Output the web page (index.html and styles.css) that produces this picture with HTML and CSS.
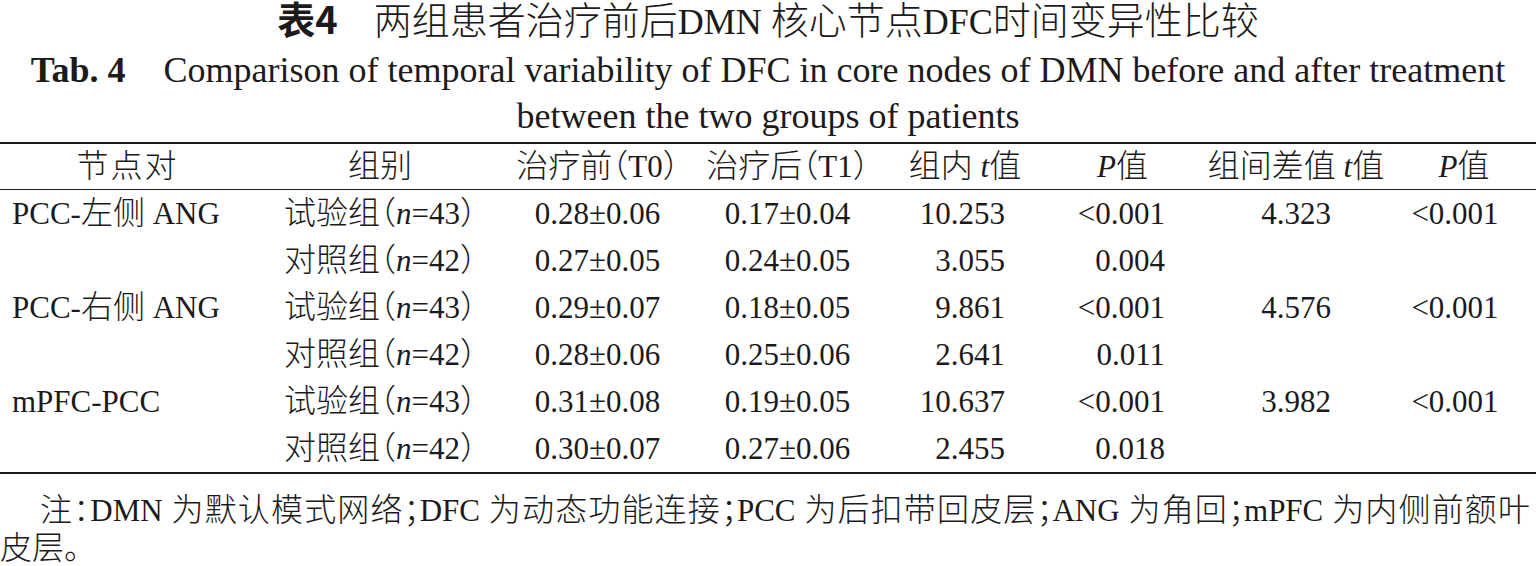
FILE: index.html
```html
<!DOCTYPE html>
<html lang="zh">
<head>
<meta charset="utf-8">
<title>表4 两组患者治疗前后DMN核心节点DFC时间变异性比较</title>
<link rel="stylesheet" href="styles.css">
</head>
<body>
<div class="page">
  <header class="caption">
    <div class="cap-zh"><b class="tabno">表4</b><span class="zh">两组患者治疗前后</span><span class="lat">DMN </span><span class="zh">核心节点</span><span class="lat">DFC</span><span class="zh">时间变异性比较</span></div>
    <div class="cap-en"><b class="tabno-en">Tab. 4</b><span class="cap-en-text">Comparison of temporal variability of DFC in core nodes of DMN before and after treatment</span><br>between the two groups of patients</div>
  </header>

  <table class="data">
    <colgroup>
      <col class="c1"><col class="c2"><col class="c3"><col class="c4">
      <col class="c5"><col class="c6"><col class="c7"><col class="c8">
    </colgroup>
    <thead>
      <tr>
        <th><span class="zh sp">节点对</span></th>
        <th><span class="zh">组别</span></th>
        <th><span class="zh">治疗前（</span>T0<span class="zh">）</span></th>
        <th><span class="zh">治疗后（</span>T1<span class="zh">）</span></th>
        <th><span class="zh">组内</span> <i>t</i><span class="zh">值</span></th>
        <th><i>P</i><span class="zh">值</span></th>
        <th><span class="zh">组间差值</span> <i>t</i><span class="zh">值</span></th>
        <th><i>P</i><span class="zh">值</span></th>
      </tr>
    </thead>
    <tbody>
      <tr>
        <td class="node">PCC-<span class="zh">左侧</span> ANG</td>
        <td><span class="zh">试验组（</span><i>n</i>=43<span class="zh">）</span></td>
        <td>0.28±0.06</td><td>0.17±0.04</td>
        <td class="tin">10.253</td><td class="pin">&lt;0.001</td>
        <td>4.323</td><td class="pbt">&lt;0.001</td>
      </tr>
      <tr>
        <td class="node"></td>
        <td><span class="zh">对照组（</span><i>n</i>=42<span class="zh">）</span></td>
        <td>0.27±0.05</td><td>0.24±0.05</td>
        <td class="tin">3.055</td><td class="pin">0.004</td>
        <td></td><td class="pbt"></td>
      </tr>
      <tr>
        <td class="node">PCC-<span class="zh">右侧</span> ANG</td>
        <td><span class="zh">试验组（</span><i>n</i>=43<span class="zh">）</span></td>
        <td>0.29±0.07</td><td>0.18±0.05</td>
        <td class="tin">9.861</td><td class="pin">&lt;0.001</td>
        <td>4.576</td><td class="pbt">&lt;0.001</td>
      </tr>
      <tr>
        <td class="node"></td>
        <td><span class="zh">对照组（</span><i>n</i>=42<span class="zh">）</span></td>
        <td>0.28±0.06</td><td>0.25±0.06</td>
        <td class="tin">2.641</td><td class="pin">0.011</td>
        <td></td><td class="pbt"></td>
      </tr>
      <tr>
        <td class="node">mPFC-PCC</td>
        <td><span class="zh">试验组（</span><i>n</i>=43<span class="zh">）</span></td>
        <td>0.31±0.08</td><td>0.19±0.05</td>
        <td class="tin">10.637</td><td class="pin">&lt;0.001</td>
        <td>3.982</td><td class="pbt">&lt;0.001</td>
      </tr>
      <tr>
        <td class="node"></td>
        <td><span class="zh">对照组（</span><i>n</i>=42<span class="zh">）</span></td>
        <td>0.30±0.07</td><td>0.27±0.06</td>
        <td class="tin">2.455</td><td class="pin">0.018</td>
        <td></td><td class="pbt"></td>
      </tr>
    </tbody>
  </table>

  <div class="note">
    <p class="note-l1"><span class="zh">注：</span>DMN <span class="zh">为默认模式网络；</span>DFC <span class="zh">为动态功能连接；</span>PCC <span class="zh">为后扣带回皮层；</span>ANG <span class="zh">为角回；</span>mPFC <span class="zh">为内侧前额叶</span></p>
    <p class="note-l2"><span class="zh">皮层。</span></p>
  </div>
</div>
</body>
</html>
```

FILE: styles.css
```css
html, body {
  margin: 0;
  padding: 0;
  background: #ffffff;
}

body {
  width: 1536px;
  height: 566px;
  overflow: hidden;
  color: #1c1a1b;
  font-family: "Liberation Serif", "Noto Sans CJK SC", serif;
}

.page {
  width: 1536px;
}

.zh {
  font-family: "Noto Sans CJK SC", sans-serif;
  font-weight: 300;
  font-feature-settings: "halt";
}

/* caption */
.caption {
  text-align: center;
}

.cap-zh {
  height: 42px;
  line-height: 42px;
  font-size: 36px;
  font-weight: 400;
  margin-bottom: 5px;
}

.cap-zh .lat {
  font-family: "Liberation Serif", serif;
  font-weight: 400;
}

.cap-zh .zh {
  font-size: 38px;
  line-height: 36px;
}

.cap-zh .tabno {
  font-family: "Noto Sans CJK SC", sans-serif;
  font-weight: 700;
  font-size: 38px;
  line-height: 36px;
  margin-right: 36px;
}

.cap-en {
  font-size: 36px;
  line-height: 46px;
  height: 92px;
}

.cap-en .tabno-en {
  margin-right: 38px;
}

/* table */
.data {
  margin-top: 3px;
  width: 1536px;
  table-layout: fixed;
  border-collapse: collapse;
  font-size: 31px;
}

.c1 { width: 255px; }
.c2 { width: 250px; }
.c3 { width: 185px; }
.c4 { width: 195px; }
.c5 { width: 160px; }
.c6 { width: 155px; }
.c7 { width: 192px; }
.c8 { width: 144px; }

.data th,
.data td {
  padding: 0;
  text-align: center;
  white-space: nowrap;
  font-weight: normal;
}

.data th {
  height: 45px;
  line-height: 45px;
  border-top: 2px solid #1c1a1b;
  border-bottom: 1px solid #1c1a1b;
}

.data td {
  height: 47px;
  line-height: 47px;
}

.data .zh {
  font-size: 32px;
  line-height: 30px;
}

.data th .sp {
  letter-spacing: 2px;
}

.data tbody tr:last-child td {
  border-bottom: 2px solid #1c1a1b;
}

.data td.node {
  text-align: left;
  padding-left: 12px;
}

.data td.tin {
  text-align: right;
  padding-right: 40px;
}

.data td.pin {
  text-align: right;
  padding-right: 35px;
}

.data td.pbt {
  padding-right: 18px;
}

/* note */
.note {
  font-size: 31px;
  margin-top: 18px;
}

.note p {
  margin: 0;
  line-height: 38px;
  height: 38px;
}

.note .zh {
  font-size: 32px;
  line-height: 30px;
}

.note-l1 {
  text-indent: 40px;
  text-align: justify;
  text-align-last: justify;
  padding-right: 6px;
}
```
